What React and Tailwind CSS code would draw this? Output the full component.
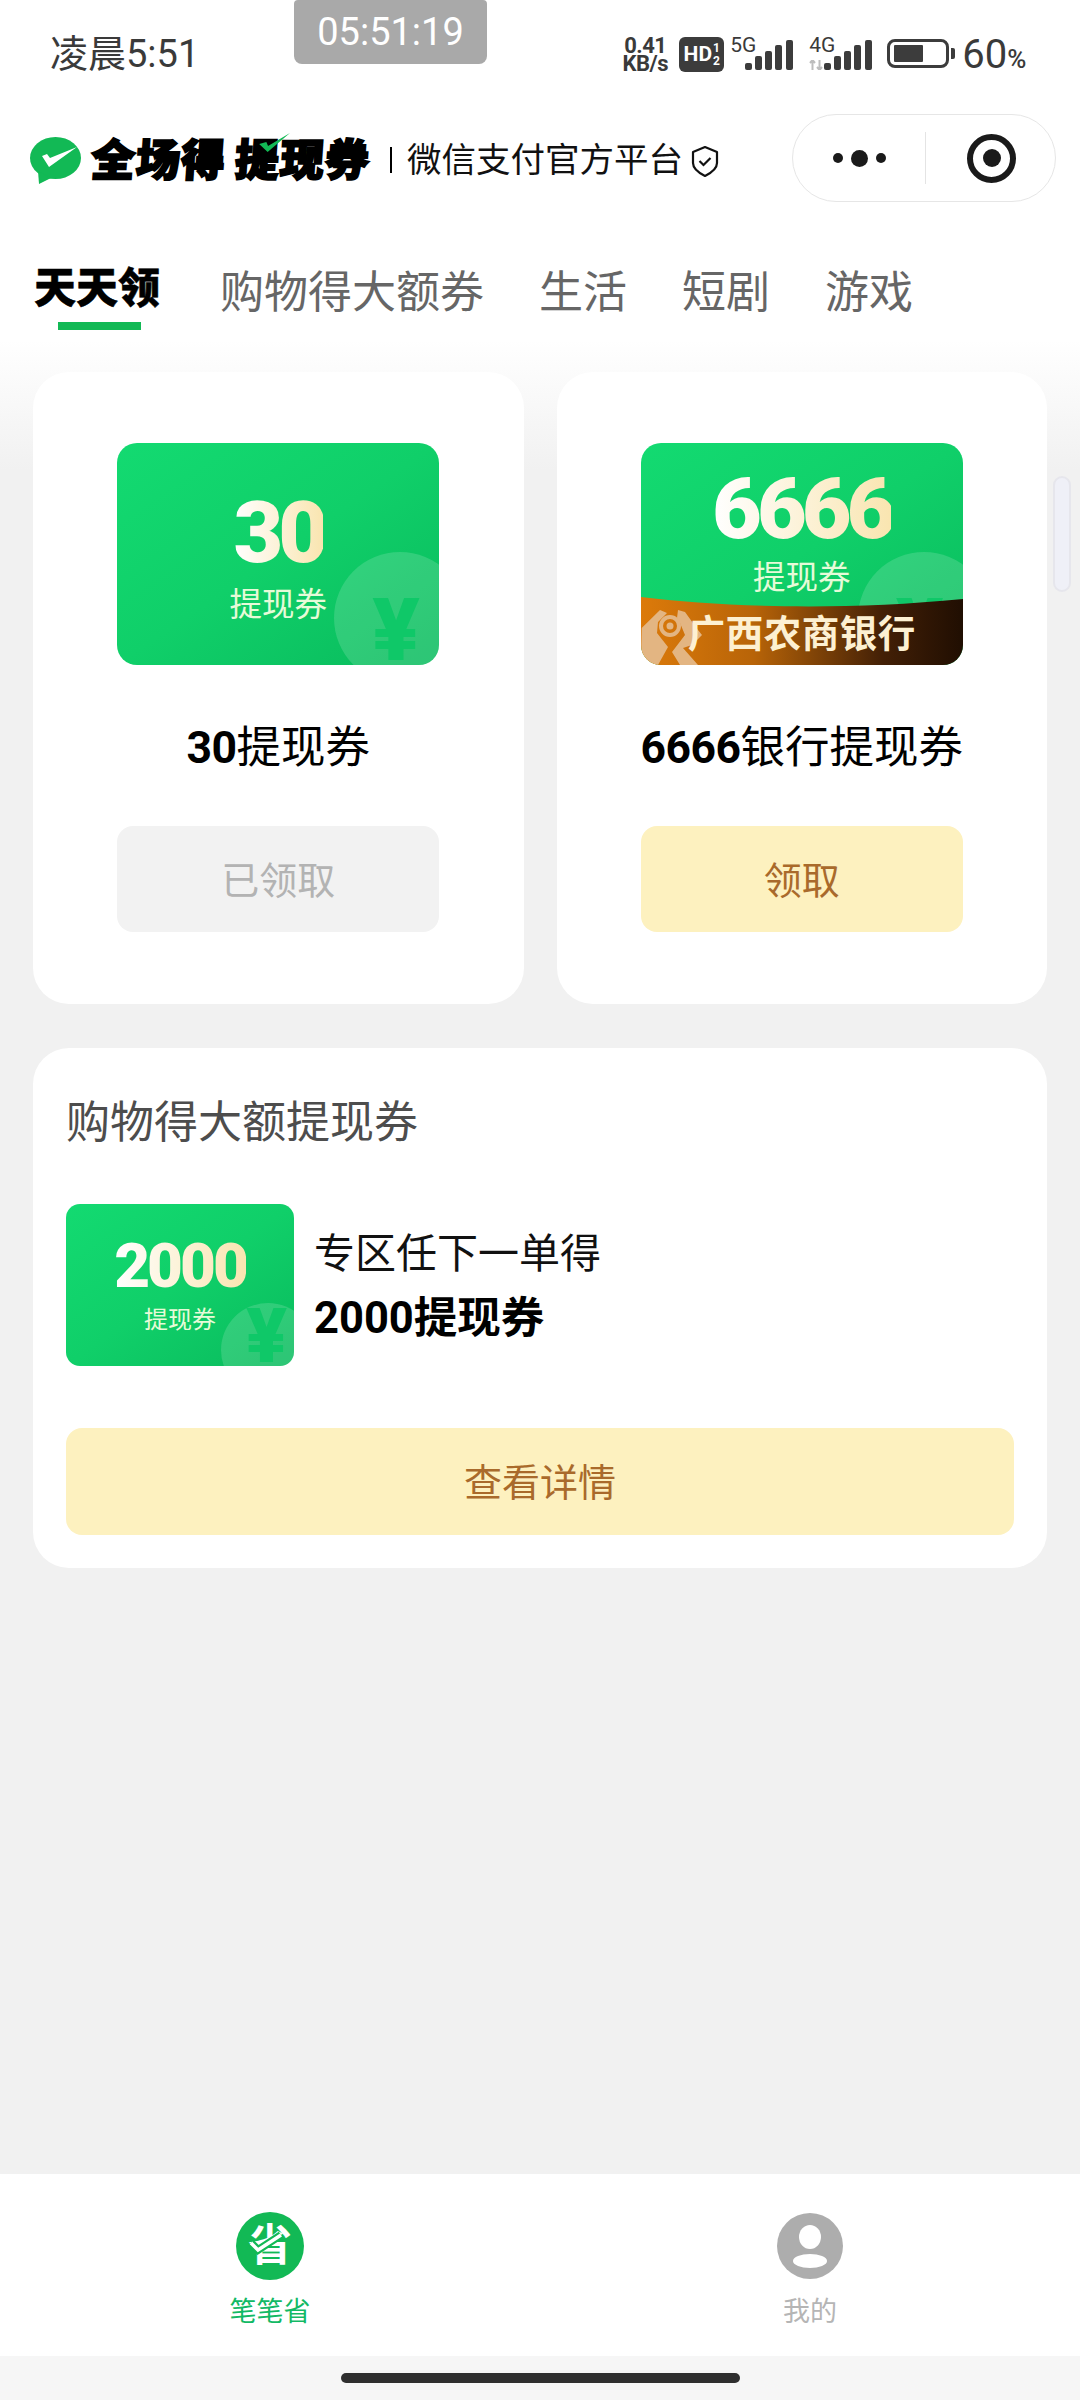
const tabs = ['购物得大额券', '生活', '短剧', '游戏']

function Signal({ className }) {
  return (
    <svg width="48" height="30" viewBox="0 0 48 30" className={className}>
      <rect x="0" y="23" width="7" height="7" rx="2" fill="#3c3c3c" />
      <rect x="10" y="16" width="7" height="14" rx="2" fill="#3c3c3c" />
      <rect x="20" y="11" width="7" height="19" rx="2" fill="#3c3c3c" />
      <rect x="30" y="5" width="7" height="25" rx="2" fill="#3c3c3c" />
      <rect x="41" y="0" width="7" height="30" rx="2" fill="#3c3c3c" />
    </svg>
  )
}

function StatusBar() {
  return (
    <div className="flex h-[114px] items-start pl-[50px] pt-[32px] text-[#3a3a3a]">
      <span className="whitespace-nowrap text-[38px] leading-[44px]">凌晨5:51</span>
      <div className="ml-[421px] mt-[5px] flex w-[50px] flex-col text-center text-[22px] font-bold leading-[18px] tracking-[-0.5px]">
        <span>0.41</span>
        <span>KB/s</span>
      </div>
      <div className="ml-[9px] mt-[5px] flex h-[35px] w-[45px] items-center justify-center gap-[1px] rounded-[6px] bg-[#3c3c3c] text-white">
        <span className="text-[21px] font-bold leading-none">HD</span>
        <div className="flex flex-col text-center text-[12px] font-bold leading-[13px]">
          <span>1</span>
          <span>2</span>
        </div>
      </div>
      <div className="relative ml-[6px] mt-[8px] h-[30px] w-[63px]">
        <span className="absolute left-0 top-[-5px] text-[21px] leading-[20px]">5G</span>
        <Signal className="absolute left-[15px] top-0" />
      </div>
      <div className="relative ml-[16px] mt-[8px] h-[30px] w-[63px]">
        <span className="absolute left-0 top-[-5px] text-[21px] leading-[20px]">4G</span>
        <svg width="14" height="10" viewBox="0 0 14 10" className="absolute left-0 top-[20px]">
          <path d="M3.5 0v10M1 3l2.5-3L6 3M10.5 10V0M8 7l2.5 3L13 7" stroke="#bdbdbd" strokeWidth="2" fill="none" />
        </svg>
        <Signal className="absolute left-[15px] top-0" />
      </div>
      <div className="ml-[15px] mt-[7px] flex h-[29px] w-[62px] items-center rounded-[8px] border-[3px] border-[#3c3c3c] px-[4px]">
        <div className="h-[17px] w-[29px] rounded-[1px] bg-[#3c3c3c]" />
      </div>
      <div className="ml-[2px] mt-[16px] h-[11px] w-[4px] rounded-r-[2px] bg-[#3c3c3c]" />
      <div className="ml-[7px] mt-[1px] flex items-baseline leading-[44px]">
        <span className="text-[40px]">60</span>
        <span className="text-[26px] font-medium">%</span>
      </div>
    </div>
  )
}

function Header() {
  return (
    <div className="flex h-[88px] items-center pl-[30px] pr-[24px]">
      <svg width="51" height="48" viewBox="0 0 51 48" className="mt-[6px] shrink-0">
        <ellipse cx="25.5" cy="21" rx="25.5" ry="21" fill="#12b955" />
        <path d="M8 34 L9 47 L21 41 Z" fill="#12b955" />
        <path d="M12 19 L17 17 L20 21 L47 10 L19 30 Z" fill="#fff" />
      </svg>
      <div className="relative ml-[10px] mt-[6px] flex w-[280px] shrink-0 -skew-x-[4deg] items-center whitespace-nowrap text-[44px] font-black leading-none tracking-[1px] text-black [-webkit-text-stroke:2px_black]">
        <span>全场得</span>
        <span className="ml-[9px]">提现券</span>
        <svg width="32" height="20" viewBox="0 0 32 20" className="absolute left-[166px] top-[-6px]">
          <path d="M1 11 L8 9 L10 13 L31 0 L10 19 Z" fill="#12b955" />
        </svg>
      </div>
      <div className="ml-[19px] mt-[4px] h-[26px] w-[2px] bg-black" />
      <span className="ml-[15px] mt-[5px] whitespace-nowrap text-[34.5px] leading-none text-[#111]">微信支付官方平台</span>
      <svg width="30" height="33" viewBox="0 0 30 33" className="ml-[7px] mt-[6px] shrink-0">
        <path d="M15 2 L27 7 V18 C27 24 21 28 15 31 C9 28 3 24 3 18 V7 Z" fill="none" stroke="#111" strokeWidth="2.2" strokeLinejoin="round" />
        <path d="M9.5 16 L13.5 20 L20.5 13" fill="none" stroke="#111" strokeWidth="2.2" />
      </svg>
      <div className="ml-auto flex h-[88px] w-[264px] shrink-0 items-center rounded-full border border-[#e6e6e6] bg-white">
        <div className="flex w-[132px] items-center justify-center gap-[8px]">
          <span className="h-[10px] w-[10px] rounded-full bg-[#1a1a1a]" />
          <span className="h-[17px] w-[17px] rounded-full bg-[#1a1a1a]" />
          <span className="h-[10px] w-[10px] rounded-full bg-[#1a1a1a]" />
        </div>
        <div className="h-[52px] w-px bg-[#e4e4e4]" />
        <div className="flex flex-1 items-center justify-center pl-[2px]">
          <div className="flex h-[49px] w-[49px] items-center justify-center rounded-full border-[6px] border-[#1a1a1a]">
            <span className="h-[18px] w-[18px] rounded-full bg-[#1a1a1a]" />
          </div>
        </div>
      </div>
    </div>
  )
}

function TabBar() {
  return (
    <div className="flex h-[138px] items-start pl-[34px] pt-[59px]">
      <div className="relative w-[128px]">
        <span className="block whitespace-nowrap text-[42px] font-black leading-[56px] text-black [-webkit-text-stroke:0.5px_black]">天天领</span>
        <div className="absolute left-[24px] top-[61px] h-[8px] w-[83px] bg-[#12b955]" />
      </div>
      <div className="ml-[58px] mt-[4px] flex gap-[55px] whitespace-nowrap text-[44px] leading-[56px] text-[#666]">
        {tabs.map((t) => (
          <span key={t}>{t}</span>
        ))}
      </div>
    </div>
  )
}

function Coupon({ amount, small, bank }) {
  return (
    <div
      className={`relative shrink-0 overflow-hidden bg-gradient-to-br from-[#13da71] via-[#10cf69] to-[#09bb5d] ${
        small ? 'h-[162px] w-[228px] rounded-[14px]' : 'h-[222px] w-[322px] rounded-[20px]'
      }`}
    >
      <div
        className={`absolute rounded-full bg-white/15 ${
          small ? 'left-[155px] top-[99px] h-[94px] w-[94px]' : 'left-[217px] top-[109px] h-[132px] w-[132px]'
        }`}
      />
      <span
        className={`absolute font-black leading-none text-[#0fc868] ${
          small ? 'left-[180px] top-[94px] text-[76px]' : 'left-[255px] top-[143px] text-[88px]'
        }`}
      >
        ¥
      </span>
      <div className={`relative flex flex-col items-center ${small ? 'pt-[31px]' : bank ? 'pt-[23px]' : 'pt-[47px]'}`}>
        <span
          className={`bg-gradient-to-r from-white to-[#f9e5b0] bg-clip-text font-black leading-none text-transparent ${
            small ? 'text-[62px] tracking-[-3px]' : 'text-[86px] tracking-[-5px]'
          }`}
        >
          {amount}
        </span>
        <span
          className={`whitespace-nowrap text-[#e6fbd8] ${
            small ? 'mt-[9px] text-[24px] leading-[28px]' : bank ? 'mt-[6px] text-[32.5px] leading-[40px]' : 'mt-[9px] text-[32.5px] leading-[40px]'
          }`}
        >
          提现券
        </span>
      </div>
      {bank && (
        <>
          <svg width="322" height="68" viewBox="0 0 322 68" className="absolute bottom-0 left-0">
            <defs>
              <linearGradient id="band" x1="0" y1="0" x2="1" y2="0">
                <stop offset="0" stopColor="#dc7a0a" />
                <stop offset="0.35" stopColor="#b86408" />
                <stop offset="0.75" stopColor="#432006" />
                <stop offset="1" stopColor="#200e02" />
              </linearGradient>
            </defs>
            <path d="M0 0 C80 10 200 14 322 2 V68 H0 Z" fill="url(#band)" />
            <g fill="#e3b582">
              <path d="M0.7 31 L19 13 L26 16 L17 25 L16 36 L27 50 L17 68 H4 L0 60 Z" />
              <path d="M37 13 L44 15 L57 33 L61 38 L51 48 L42 51 L57 68 H39 L31 55 L44 38 L39 26 L36 21 Z" />
            </g>
            <circle cx="29" cy="29" r="9" fill="none" stroke="#e3b582" strokeWidth="4" />
            <circle cx="29" cy="29" r="3.5" fill="#e3b582" />
          </svg>
          <span className="absolute bottom-[9px] left-[47px] whitespace-nowrap text-[37.5px] font-bold leading-[44px] tracking-[0.5px] text-[#fdf0d2]">
            广西农商银行
          </span>
        </>
      )}
    </div>
  )
}

function TopCard({ amount, title, bank, claimed }) {
  return (
    <div className="flex flex-col items-center rounded-[36px] bg-white pb-[72px] pt-[71px]">
      <Coupon amount={amount} bank={bank} />
      <div className="mt-[53px] flex h-[60px] items-center whitespace-nowrap text-[44.5px] leading-none text-black">
        <b className="font-bold tracking-[-0.5px]">{amount}</b>
        <span>{title}</span>
      </div>
      <button
        className={`mt-[48px] h-[106px] w-[322px] rounded-[16px] pt-[4px] text-[38px] ${
          claimed ? 'bg-[#f2f2f2] text-[#b3b3b3]' : 'bg-[#fdf1bf] text-[#a96a2b]'
        }`}
      >
        {claimed ? '已领取' : '领取'}
      </button>
    </div>
  )
}

export default function App() {
  return (
    <div className="relative flex h-[2400px] w-[1080px] flex-col overflow-hidden bg-[#f1f1f1] font-[Roboto,'Noto_Sans_CJK_SC',sans-serif]">
      <div className="bg-white">
        <StatusBar />
        <Header />
        <TabBar />
      </div>

      <div className="absolute left-[294px] top-0 flex h-[64px] w-[193px] items-center justify-center rounded-b-[8px] rounded-t-[4px] bg-[#a9a9a9] text-[38px] text-white">
        05:51:19
      </div>

      <div className="flex-1 bg-gradient-to-b from-white to-[#f1f1f1] to-[130px] px-[33px] pt-[32px]">
        <div className="grid grid-cols-2 gap-[33px]">
          <TopCard amount="30" title="提现券" claimed />
          <TopCard amount="6666" title="银行提现券" bank />
        </div>

        <div className="mt-[44px] rounded-[36px] bg-white px-[33px] pb-[33px] pt-[45px]">
          <div className="text-[44px] leading-[60px] text-[#4d4d4d]">购物得大额提现券</div>
          <div className="mt-[51px] flex items-center">
            <Coupon amount="2000" small />
            <div className="ml-[20px] flex flex-col pt-[3px]">
              <span className="whitespace-nowrap text-[41px] leading-[60px] text-[#111]">专区任下一单得</span>
              <span className="mt-[5px] whitespace-nowrap text-[43.5px] font-bold leading-[60px] text-black">2000提现券</span>
            </div>
          </div>
          <button className="mt-[62px] h-[107px] w-full rounded-[16px] bg-[#fdf1bf] pt-[4px] text-[38px] text-[#a96a2b]">
            查看详情
          </button>
        </div>
      </div>

      <div className="absolute left-[1053px] top-[476px] h-[116px] w-[18px] rounded-full border-[2px] border-[#e6e6ec] bg-[#eff0f7]" />

      <div className="grid h-[182px] grid-cols-2 bg-white pt-[38px]">
        <div className="flex flex-col items-center">
          <div className="relative flex h-[68px] w-[68px] items-center justify-center rounded-full bg-[#12b955] text-[44px] font-bold leading-none text-white">
            省
            <svg width="68" height="68" viewBox="0 0 68 68" className="absolute left-0 top-0">
              <path d="M15 31 L22 38 L45 23" fill="none" stroke="#12b955" strokeWidth="8" />
              <path d="M15 31 L22 38 L45 23" fill="none" stroke="#fff" strokeWidth="3.5" />
            </svg>
          </div>
          <span className="mt-[15px] text-[27px] leading-[34px] text-[#12b965]">笔笔省</span>
        </div>
        <div className="flex flex-col items-center pt-[1px]">
          <svg width="66" height="66" viewBox="0 0 66 66">
            <circle cx="33" cy="33" r="33" fill="#adadad" />
            <ellipse cx="33" cy="24" rx="11" ry="12" fill="#fff" />
            <ellipse cx="33" cy="48" rx="17" ry="7" fill="#fff" />
          </svg>
          <span className="mt-[16px] text-[27px] leading-[34px] text-[#b5b5b5]">我的</span>
        </div>
      </div>

      <div className="flex h-[44px] justify-center bg-[#f6f6f6] pt-[17px]">
        <div className="h-[10px] w-[399px] rounded-full bg-[#2f2f2f]" />
      </div>
    </div>
  )
}
